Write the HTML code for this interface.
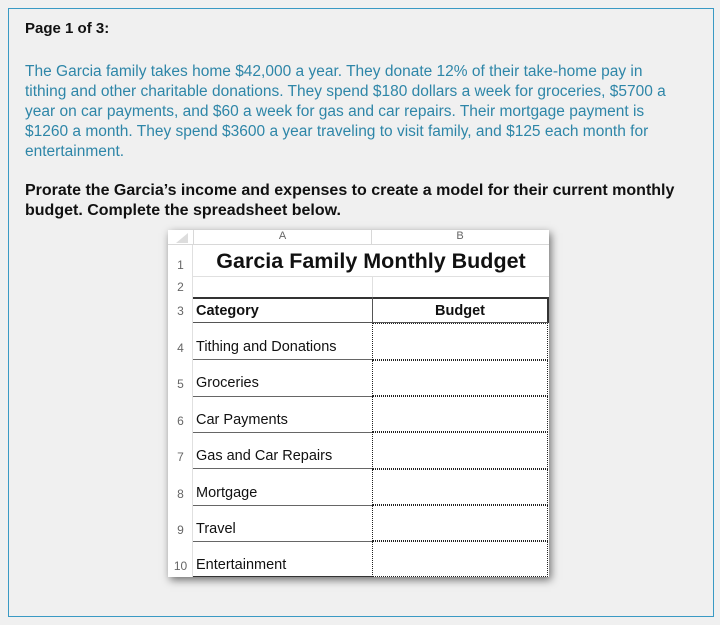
<!DOCTYPE html>
<html><head><style>
body{margin:0;width:720px;height:625px;background:#f0f0f0;font-family:"Liberation Sans",sans-serif;position:relative;overflow:hidden}
.frame{position:absolute;left:8px;top:8px;width:706px;height:609px;border:1px solid #3a9ac4;box-sizing:border-box}
.t{position:absolute;left:25px;white-space:nowrap;font-size:15px}
.h{top:20px;font-weight:bold;color:#111}
.p{top:62px;color:#2e86a8;line-height:20px;font-size:15.5px}
.b{top:181px;font-weight:bold;color:#111;line-height:20px;font-size:16px}
.ss{position:absolute;left:168px;top:230px;width:381px;height:347px;background:#fff;box-shadow:2px 3px 8px rgba(0,0,0,.55)}
.ss div{position:absolute;box-sizing:border-box}
.rn{left:0;width:25px;color:#666;font-size:12px;text-align:center}
.ca{left:25px;width:179px;font-size:14.5px;color:#111;padding-left:3px}
.cb{left:204px;width:176px;border:1px dotted #222}
</style></head><body>
<div class="frame"></div>
<div class="t h">Page 1 of 3:</div>
<div class="t p">The Garcia family takes home $42,000 a year. They donate 12% of their take-home pay in<br>tithing and other charitable donations. They spend $180 dollars a week for groceries, $5700 a<br>year on car payments, and $60 a week for gas and car repairs. Their mortgage payment is<br>$1260 a month. They spend $3600 a year traveling to visit family, and $125 each month for<br>entertainment.</div>
<div class="t b">Prorate the Garcia’s income and expenses to create a model for their current monthly<br>budget. Complete the spreadsheet below.</div>
<div class="ss">
<div style="left:0;top:0;width:381px;height:15px;border-bottom:1px solid #d8d8d8;background:#fff"></div>
<div style="left:8px;top:3px;width:0;height:0;border-left:12px solid transparent;border-bottom:10px solid #ddd"></div>
<div style="left:25px;top:0;width:179px;height:15px;text-align:center;font-size:11px;color:#666;border-left:1px solid #d8d8d8;border-right:1px solid #d8d8d8">A</div>
<div style="left:204px;top:0;width:176px;height:15px;text-align:center;font-size:11px;color:#666">B</div>
<div style="left:24px;top:15px;width:1px;height:332px;background:#e0e0e0"></div>
<div class="rn" style="top:28px">1</div>
<div style="left:25px;top:15px;width:356px;height:32px;text-align:center;font-weight:bold;font-size:21.5px;line-height:32px;color:#111;border-bottom:1px solid #e0e0e0">Garcia Family Monthly Budget</div>
<div class="rn" style="top:50px">2</div>
<div style="left:204px;top:47px;width:1px;height:20px;background:#e0e0e0"></div>
<div style="left:25px;top:67px;width:356px;height:26px;border-top:2px solid #333;border-bottom:1px solid #555;border-right:2px solid #333"></div>
<div style="left:204px;top:67px;width:1px;height:26px;background:#555"></div>
<div class="rn" style="top:74px">3</div>
<div class="ca" style="top:73px;font-weight:bold">Category</div>
<div style="left:204px;top:73px;width:176px;text-align:center;font-weight:bold;font-size:14.5px;color:#111">Budget</div>
<div class="rn" style="top:111px">4</div><div class="ca" style="top:109px">Tithing and Donations</div>
<div class="rn" style="top:147px">5</div><div class="ca" style="top:145px">Groceries</div>
<div class="rn" style="top:184px">6</div><div class="ca" style="top:182px">Car Payments</div>
<div class="rn" style="top:220px">7</div><div class="ca" style="top:218px">Gas and Car Repairs</div>
<div class="rn" style="top:257px">8</div><div class="ca" style="top:255px">Mortgage</div>
<div class="rn" style="top:293px">9</div><div class="ca" style="top:291px">Travel</div>
<div class="rn" style="top:329px">10</div><div class="ca" style="top:327px">Entertainment</div>
<div style="left:25px;top:129px;width:179px;height:1px;background:#666"></div>
<div style="left:25px;top:166px;width:179px;height:1px;background:#666"></div>
<div style="left:25px;top:202px;width:179px;height:1px;background:#666"></div>
<div style="left:25px;top:238px;width:179px;height:1px;background:#666"></div>
<div style="left:25px;top:275px;width:179px;height:1px;background:#666"></div>
<div style="left:25px;top:311px;width:179px;height:1px;background:#666"></div>
<div style="left:25px;top:346px;width:179px;height:1px;background:#333"></div>
<div class="cb" style="top:93px;height:37px"></div>
<div class="cb" style="top:130px;height:36px"></div>
<div class="cb" style="top:166px;height:36px"></div>
<div class="cb" style="top:202px;height:37px"></div>
<div class="cb" style="top:239px;height:36px"></div>
<div class="cb" style="top:275px;height:36px"></div>
<div class="cb" style="top:311px;height:36px"></div>
</div>
</body></html>
